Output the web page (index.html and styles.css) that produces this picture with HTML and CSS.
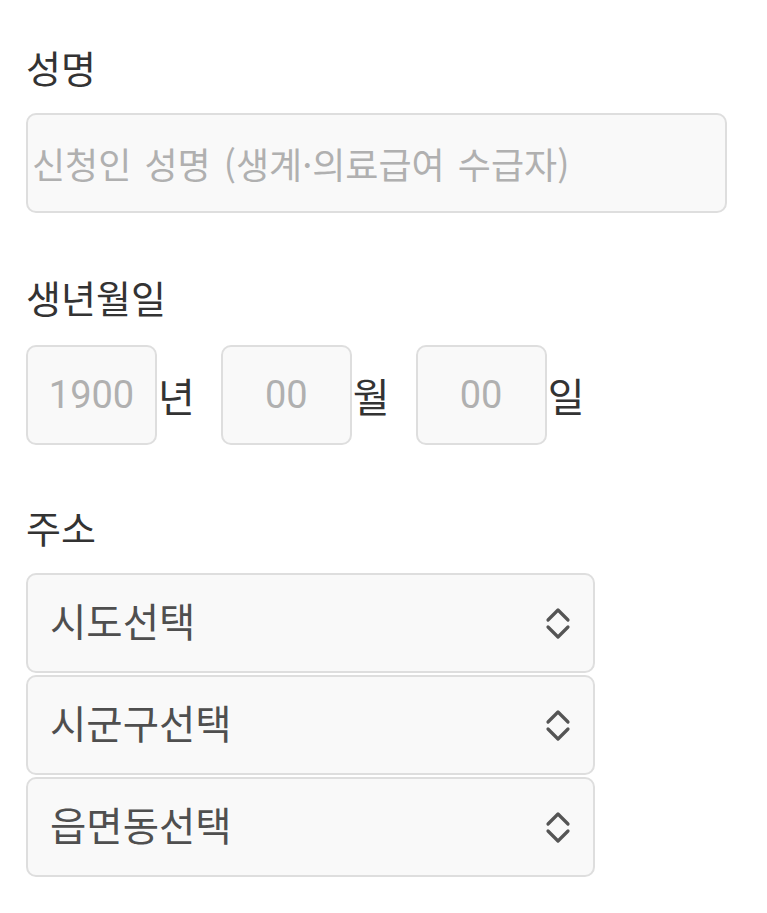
FILE: index.html
```html
<!DOCTYPE html>
<html lang="ko">
<head>
    <meta charset="UTF-8">
    <meta name="viewport" content="width=device-width, initial-scale=1.0">
    <title>신청서</title>
    <link rel="stylesheet" href="styles.css">
</head>
<body>
    <form class="form">
        <div class="field">
            <label class="label" for="name">성명</label>
            <input type="text" class="text-input" id="name" placeholder="신청인 성명 (생계·의료급여 수급자)">
        </div>

        <div class="field field-date">
            <label class="label">생년월일</label>
            <div class="date-row">
                <input type="text" class="date-input" placeholder="1900" maxlength="4">
                <span class="unit">년</span>
                <input type="text" class="date-input" placeholder="00" maxlength="2">
                <span class="unit">월</span>
                <input type="text" class="date-input" placeholder="00" maxlength="2">
                <span class="unit">일</span>
            </div>
        </div>

        <div class="field">
            <label class="label">주소</label>
            <div class="select-box">
                <span class="select-text">시도선택</span>
                <svg class="select-arrow" width="28" height="34" viewBox="0 0 28 34"><path d="M4 14 L14 4 L24 14 M4 21 L14 31 L24 21" fill="none" stroke="#555" stroke-width="3.2" stroke-linecap="round" stroke-linejoin="round"/></svg>
            </div>
            <div class="select-box">
                <span class="select-text">시군구선택</span>
                <svg class="select-arrow" width="28" height="34" viewBox="0 0 28 34"><path d="M4 14 L14 4 L24 14 M4 21 L14 31 L24 21" fill="none" stroke="#555" stroke-width="3.2" stroke-linecap="round" stroke-linejoin="round"/></svg>
            </div>
            <div class="select-box">
                <span class="select-text">읍면동선택</span>
                <svg class="select-arrow" width="28" height="34" viewBox="0 0 28 34"><path d="M4 14 L14 4 L24 14 M4 21 L14 31 L24 21" fill="none" stroke="#555" stroke-width="3.2" stroke-linecap="round" stroke-linejoin="round"/></svg>
            </div>
        </div>
    </form>
</body>
</html>
```

FILE: styles.css
```css
body {
    margin: 0;
    background: #fff;
    font-family: "Noto Sans CJK KR", "Noto Sans", sans-serif;
    color: #333;
}
.form {
    padding: 40px 40px 0 26px;
}
.field {
    margin-bottom: 57px;
}
.field-date {
    margin-bottom: 55px;
}
.label {
    display: block;
    font-size: 38px;
    line-height: 54px;
    margin-bottom: 19px;
    color: #333;
}
.field-date .label {
    margin-bottom: 21px;
}
.text-input,
.date-input {
    box-sizing: border-box;
    height: 100px;
    border: 2px solid #dedede;
    border-radius: 10px;
    background: #f9f9f9;
    color: #333;
    outline: none;
}
.text-input {
    width: 701px;
    padding: 0 4px;
    display: block;
    font-family: "Noto Sans CJK KR", sans-serif;
    font-size: 36px;
    word-spacing: 3px;
}
.text-input::placeholder,
.date-input::placeholder {
    color: #b0b0b0;
}
.date-row {
    display: flex;
    align-items: center;
}
.date-input {
    width: 131px;
    padding: 0;
    text-align: center;
    font-family: Roboto, "Noto Sans", sans-serif;
    font-size: 38px;
}
.unit {
    font-size: 40px;
    margin: 0 26px 0 1px;
    color: #333;
}
.select-box {
    box-sizing: border-box;
    width: 569px;
    height: 100px;
    margin-bottom: 2px;
    padding: 0 21px 0 22px;
    border: 2px solid #dedede;
    border-radius: 10px;
    background: #f9f9f9;
    display: flex;
    align-items: center;
    justify-content: space-between;
}
.select-text {
    font-size: 39.5px;
    color: #4f4f4f;
    margin-top: -7px;
}
.select-arrow {
    display: block;
}
```
